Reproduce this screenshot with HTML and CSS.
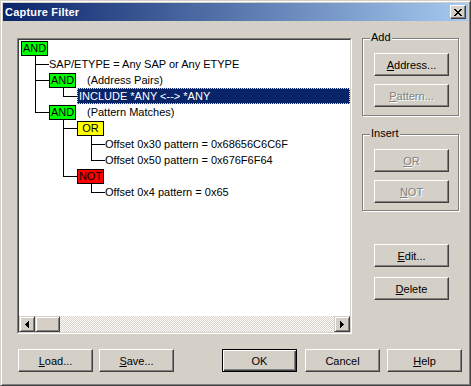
FILE: index.html
```html
<!DOCTYPE html>
<html lang="en">
<head>
    <meta charset="UTF-8">
    <title>Capture Filter</title>
    <link rel="stylesheet" href="styles.css">
</head>
<body>
    <div class="dialog">
        <!-- Title bar -->
        <div class="titlebar">
            <span class="title">Capture Filter</span>
            <button class="close-btn" aria-label="Close">
                <svg width="8" height="7" viewBox="0 0 8 7" shape-rendering="crispEdges">
                    <path d="M0 0h2v1h-2zM6 0h2v1h-2zM1 1h2v1h-2zM5 1h2v1h-2zM2 2h4v1h-4zM3 3h2v1h-2zM2 4h4v1h-4zM1 5h2v1h-2zM5 5h2v1h-2zM0 6h2v1h-2zM6 6h2v1h-2z" fill="#000"/>
                </svg>
            </button>
        </div>

        <div class="main">
            <!-- Filter tree -->
            <div class="tree-view">
                <div class="tree-frame">
                    <div class="tree-body">
                        <ul class="tree">
                            <li>
                                <div class="node"><span class="op op-and">AND</span></div>
                                <ul>
                                    <li><div class="node"><span class="label">SAP/ETYPE = Any SAP or Any ETYPE</span></div></li>
                                    <li>
                                        <div class="node"><span class="op op-and">AND</span><span class="note">(Address Pairs)</span></div>
                                        <ul>
                                            <li><div class="node"><span class="label selected">INCLUDE *ANY &lt;--&gt; *ANY</span></div></li>
                                        </ul>
                                    </li>
                                    <li>
                                        <div class="node"><span class="op op-and">AND</span><span class="note">(Pattern Matches)</span></div>
                                        <ul>
                                            <li>
                                                <div class="node"><span class="op op-or">OR</span></div>
                                                <ul>
                                                    <li><div class="node"><span class="label">Offset 0x30 pattern = 0x68656C6C6F</span></div></li>
                                                    <li><div class="node"><span class="label">Offset 0x50 pattern = 0x676F6F64</span></div></li>
                                                </ul>
                                            </li>
                                            <li>
                                                <div class="node"><span class="op op-not">NOT</span></div>
                                                <ul>
                                                    <li><div class="node"><span class="label">Offset 0x4 pattern = 0x65</span></div></li>
                                                </ul>
                                            </li>
                                        </ul>
                                    </li>
                                </ul>
                            </li>
                        </ul>
                    </div>
                    <!-- Horizontal scrollbar -->
                    <div class="hscroll">
                        <span class="sb-btn">
                            <svg width="4" height="7" viewBox="0 0 4 7" shape-rendering="crispEdges"><path d="M0 3h1v1h-1zM1 2h1v3h-1zM2 1h1v5h-1zM3 0h1v7h-1z" fill="#000"/></svg>
                        </span>
                        <span class="sb-thumb"></span>
                        <span class="sb-track"></span>
                        <span class="sb-btn">
                            <svg width="4" height="7" viewBox="0 0 4 7" shape-rendering="crispEdges"><path d="M3 3h1v1h-1zM2 2h1v3h-1zM1 1h1v5h-1zM0 0h1v7h-1z" fill="#000"/></svg>
                        </span>
                    </div>
                </div>
            </div>

            <!-- Side buttons -->
            <div class="side">
                <div class="group group-add">
                    <span class="group-label">Add</span>
                    <button class="btn"><u>A</u>ddress...</button>
                    <button class="btn" disabled><u>P</u>attern...</button>
                </div>
                <div class="group group-insert">
                    <span class="group-label">Insert</span>
                    <button class="btn" disabled><u>O</u>R</button>
                    <button class="btn" disabled><u>N</u>OT</button>
                </div>
                <button class="btn btn-edit"><u>E</u>dit...</button>
                <button class="btn btn-delete"><u>D</u>elete</button>
            </div>
        </div>

        <!-- Bottom buttons -->
        <div class="footer">
            <button class="btn"><u>L</u>oad...</button>
            <button class="btn btn-save"><u>S</u>ave...</button>
            <button class="btn btn-default btn-ok">OK</button>
            <button class="btn btn-cancel">Cancel</button>
            <button class="btn btn-help"><u>H</u>elp</button>
        </div>
    </div>
</body>
</html>
```

FILE: styles.css
```css
/* Classic dialog window */
body {
    margin: 0;
    background: #d4d0c8;
    font-family: "Liberation Sans", Arial, sans-serif;
    font-size: 11px;
    color: #000;
}

.dialog {
    box-sizing: border-box;
    width: 471px;
    height: 386px;
    background: #d4d0c8;
    border: 1px solid;
    border-color: #d4d0c8 #404040 #404040 #d4d0c8;
    box-shadow: inset 1px 1px #fff, inset -1px -1px #808080;
    padding: 2px;
}

/* Title bar */
.titlebar {
    height: 18px;
    display: flex;
    align-items: center;
    justify-content: space-between;
    background: linear-gradient(to right, #0a246a, #a6caf0);
    padding: 0 2px 0 2px;
}

.title {
    color: #fff;
    font-weight: bold;
    font-size: 11px;
    letter-spacing: 0.2px;
}

.close-btn {
    box-sizing: border-box;
    width: 16px;
    height: 14px;
    padding: 0;
    margin: 0;
    display: flex;
    align-items: center;
    justify-content: center;
    background: #d4d0c8;
    border: 1px solid;
    border-color: #fff #404040 #404040 #fff;
    box-shadow: inset -1px -1px #808080;
}

/* Main area */
.main {
    display: flex;
    margin-top: 17px;
    padding-left: 14px;
}

/* Tree view */
.tree-view {
    box-sizing: border-box;
    width: 335px;
    height: 296px;
    border: 1px solid;
    border-color: #808080 #fff #fff #808080;
}

.tree-frame {
    box-sizing: border-box;
    height: 100%;
    display: flex;
    flex-direction: column;
    border: 1px solid;
    border-color: #404040 #d4d0c8 #d4d0c8 #404040;
}

.tree-body {
    flex: 1;
    background: #fff;
    overflow: hidden;
    padding-left: 2px;
}

.tree,
.tree ul {
    list-style: none;
    margin: 0;
    padding: 0;
}

.tree ul {
    padding-left: 28px;
}

.tree li {
    position: relative;
}

/* Connector lines */
.tree ul > li::before {
    content: "";
    position: absolute;
    left: -14px;
    top: 0;
    bottom: 0;
    border-left: 1px solid #000;
}

.tree ul > li:last-child::before {
    bottom: auto;
    height: 9px;
}

.tree ul > li > .node::before {
    content: "";
    position: absolute;
    left: -14px;
    top: 8px;
    width: 14px;
    border-top: 1px solid #000;
}

.node {
    position: relative;
    display: flex;
    align-items: flex-start;
    height: 16px;
}

.op {
    box-sizing: border-box;
    width: 27px;
    height: 15px;
    margin-top: 1px;
    border: 1px solid #000;
    text-align: center;
    line-height: 13px;
}

.op-and {
    background: #00ff00;
}

.op-or {
    background: #ffff00;
}

.op-not {
    background: #ff0000;
}

.label {
    line-height: 16px;
    white-space: nowrap;
}

.note {
    margin-left: 11px;
    line-height: 16px;
    white-space: nowrap;
}

.label.selected {
    flex: 1;
    box-sizing: border-box;
    height: 16px;
    line-height: 14px;
    padding: 0 1px;
    background: #0a246a;
    color: #fff;
    border: 1px dotted #e6dfa0;
}

/* Scrollbar */
.hscroll {
    display: flex;
    height: 16px;
}

.sb-btn,
.sb-thumb {
    box-sizing: border-box;
    height: 16px;
    background: #d4d0c8;
    border: 1px solid;
    border-color: #d4d0c8 #404040 #404040 #d4d0c8;
    box-shadow: inset 1px 1px #fff, inset -1px -1px #808080;
}

.sb-btn {
    width: 16px;
    display: flex;
    align-items: center;
    justify-content: center;
}

.sb-thumb {
    width: 25px;
}

.sb-track {
    flex: 1;
    background: repeating-conic-gradient(#d4d0c8 0 25%, #fff 0 50%) 0 0 / 2px 2px;
}

/* Side column */
.side {
    margin-left: 10px;
    width: 98px;
    display: flex;
    flex-direction: column;
    align-items: flex-start;
}

.group {
    position: relative;
    box-sizing: border-box;
    width: 97px;
    border: 1px solid #808080;
    box-shadow: inset 1px 1px #fff, 1px 1px #fff;
    padding: 14px 0 0 11px;
    display: flex;
    flex-direction: column;
    gap: 8px;
}

.group-add {
    height: 78px;
}

.group-insert {
    height: 77px;
    margin-top: 18px;
}

.group-label {
    position: absolute;
    top: -8px;
    left: 7px;
    padding: 0 1px;
    background: #d4d0c8;
    line-height: 13px;
}

/* Buttons */
.btn {
    box-sizing: border-box;
    width: 75px;
    height: 23px;
    margin: 0;
    padding: 0;
    font-family: "Liberation Sans", Arial, sans-serif;
    font-size: 11px;
    color: #000;
    background: #d4d0c8;
    border: 1px solid;
    border-color: #fff #404040 #404040 #fff;
    box-shadow: inset -1px -1px #808080;
}

.btn:disabled {
    color: #808080;
    text-shadow: 1px 1px #fff;
}

.btn-default {
    border-color: #000;
    box-shadow: inset 1px 1px #fff, inset -1px -1px #404040, inset -2px -2px #808080;
}

.btn-edit {
    margin-top: 33px;
    margin-left: 12px;
}

.btn-delete {
    margin-top: 10px;
    margin-left: 12px;
}

/* Footer */
.footer {
    display: flex;
    margin-top: 15px;
    padding: 0 6px 0 15px;
}

.btn-save {
    margin-left: 6px;
}

.btn-ok {
    margin-left: auto;
}

.btn-cancel {
    margin-left: 8px;
}

.btn-help {
    margin-left: 7px;
}
```
